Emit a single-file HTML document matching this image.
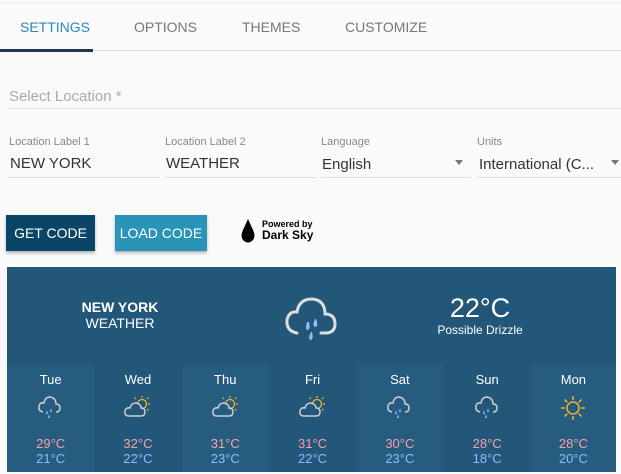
<!DOCTYPE html><html><head><style>
body{margin:0;width:621px;height:474px;background:#fafafa;font-family:"Liberation Sans",sans-serif;position:relative;overflow:hidden}
.a{position:absolute}
.tab{position:absolute;top:19px;font-size:14px;color:#777}
.lab{position:absolute;top:136px;font-size:11px;color:#888}
.val{position:absolute;top:155px;font-size:15px;color:#333}
.ln{position:absolute;height:1px;background:#ddd;top:177px}
.col{position:absolute;top:365px;width:87.3px;height:107px;text-align:center;color:#fff}
.col .d{position:absolute;top:7px;width:100%;font-size:13px}
.col .h{position:absolute;top:71px;width:100%;font-size:13px;color:#f4a0a8}
.col .l{position:absolute;top:86px;width:100%;font-size:13px;color:#8cbcff}
.col svg{position:absolute;left:28px;top:28px}
</style></head><body>
<div class="a" style="left:0;top:2px;width:621px;height:1px;background:#eee"></div>
<div class="tab" style="left:20px;color:#2a8ab7">SETTINGS</div>
<div class="tab" style="left:134px">OPTIONS</div>
<div class="tab" style="left:242px">THEMES</div>
<div class="tab" style="left:345px">CUSTOMIZE</div>
<div class="a" style="left:0;top:50px;width:621px;height:1px;background:#ddd"></div>
<div class="a" style="left:0;top:49px;width:93px;height:3px;background:#1e3a52"></div>
<div class="a" style="left:9px;top:88px;font-size:15px;color:#aaa">Select Location *</div>
<div class="a" style="left:8px;top:108px;width:613px;height:1px;background:#ddd"></div>
<div class="lab" style="left:9px">Location Label 1</div>
<div class="lab" style="left:165px">Location Label 2</div>
<div class="lab" style="left:321px">Language</div>
<div class="lab" style="left:477px">Units</div>
<div class="val" style="left:10px">NEW YORK</div>
<div class="val" style="left:166px">WEATHER</div>
<div class="val" style="left:322px;top:156px">English</div>
<div class="val" style="left:479px;top:156px">International (C...</div>
<div class="a" style="left:455px;top:160px;border:4px solid transparent;border-top:5px solid #777"></div>
<div class="a" style="left:611px;top:160px;border:4px solid transparent;border-top:5px solid #777"></div>
<div class="ln" style="left:8px;width:152px"></div><div class="ln" style="left:165px;width:151px"></div>
<div class="ln" style="left:321px;width:150px"></div><div class="ln" style="left:477px;width:144px"></div>
<div class="a" style="left:6px;top:215px;width:89px;height:36px;background:#0a4466;color:#fff;font-size:14px;line-height:36px;text-align:center;box-shadow:0 2px 3px rgba(0,0,0,.3)">GET CODE</div>
<div class="a" style="left:115px;top:215px;width:92px;height:36px;background:#2a93b8;color:#fff;font-size:14px;line-height:36px;text-align:center;box-shadow:0 2px 3px rgba(0,0,0,.3)">LOAD CODE</div>
<svg class="a" style="left:240px;top:218px" width="16" height="26"><path d="M8 1 L3 12 Q0 18 3 22 Q8 27 13 22 Q16 18 13 12 Z" fill="#000"/></svg>
<div class="a" style="left:262px;top:219px;font-size:9px;font-weight:bold;line-height:10px">Powered by<br><span style="font-size:12px;line-height:13px">Dark Sky</span></div>
<div class="a" style="left:7px;top:267px;width:609px;height:205px;background:#22577a"></div>
<div class="a" style="left:60px;top:299px;width:120px;text-align:center;color:#fff;font-size:14px;line-height:16px"><b>NEW YORK</b><br>WEATHER</div>
<svg class="a" style="left:280px;top:292px" width="64" height="60"><path d="M17 41 Q6 39 7 28 Q9 19 17 20 Q19 7 32 7 Q45 8 45 22 Q55 22 55 32 Q55 41 45 41 L41 41" fill="none" stroke="#ddd" stroke-width="3" stroke-linecap="round"/><path d="M27 30 Q25 36 27 38 Q31 38 29 30Z M35 27 Q32 34 35 35 Q39 35 36 27Z M31 40 Q28 46 30 48 Q34 48 32 40Z" fill="#8cbcff"/></svg>
<div class="a" style="left:420px;top:293px;width:120px;text-align:center;color:#fff;font-size:27px">22°C</div>
<div class="a" style="left:420px;top:323px;width:120px;text-align:center;color:#fff;font-size:12px">Possible Drizzle</div>
<div class="col" style="left:7px;background:#265c80"><div class="d">Tue</div><svg width="30" height="30"><path d="M8 19 Q3 18 4 13 Q5 9 9 10 Q10 4 15 4 Q21 5 21 11 Q25 11 25 15 Q25 19 21 19" fill="none" stroke="#ccc" stroke-width="1.5"/><path d="M12 17l-1 4h2zM16 15l-1 4h2zM14 21l-1 4h2z" fill="#8cbcff"/></svg><div class="h">29°C</div><div class="l">21°C</div></div>
<div class="col" style="left:94.3px"><div class="d">Wed</div><svg width="30" height="30"><circle cx="20" cy="11" r="4.5" fill="none" stroke="#f0b429" stroke-width="1.3"/><path d="M20 3v2M26 11h2M25 6l1.5-1.5M25 16l1.5 1.5M14 6l-1.5-1.5" stroke="#f0b429" stroke-width="1.2"/><path d="M6 23 Q2 22 3 18 Q4 14 8 15 Q9 10 14 10 Q19 11 19 15 Q23 15 23 19 Q23 23 19 23Z" fill="#22577a" stroke="#ccc" stroke-width="1.5"/></svg><div class="h">32°C</div><div class="l">22°C</div></div>
<div class="col" style="left:181.6px;background:#265c80"><div class="d">Thu</div><svg width="30" height="30"><circle cx="20" cy="11" r="4.5" fill="none" stroke="#f0b429" stroke-width="1.3"/><path d="M20 3v2M26 11h2M25 6l1.5-1.5M25 16l1.5 1.5M14 6l-1.5-1.5" stroke="#f0b429" stroke-width="1.2"/><path d="M6 23 Q2 22 3 18 Q4 14 8 15 Q9 10 14 10 Q19 11 19 15 Q23 15 23 19 Q23 23 19 23Z" fill="#265c80" stroke="#ccc" stroke-width="1.5"/></svg><div class="h">31°C</div><div class="l">23°C</div></div>
<div class="col" style="left:268.9px"><div class="d">Fri</div><svg width="30" height="30"><circle cx="20" cy="11" r="4.5" fill="none" stroke="#f0b429" stroke-width="1.3"/><path d="M20 3v2M26 11h2M25 6l1.5-1.5M25 16l1.5 1.5M14 6l-1.5-1.5" stroke="#f0b429" stroke-width="1.2"/><path d="M6 23 Q2 22 3 18 Q4 14 8 15 Q9 10 14 10 Q19 11 19 15 Q23 15 23 19 Q23 23 19 23Z" fill="#22577a" stroke="#ccc" stroke-width="1.5"/></svg><div class="h">31°C</div><div class="l">22°C</div></div>
<div class="col" style="left:356.2px;background:#265c80"><div class="d">Sat</div><svg width="30" height="30"><path d="M8 19 Q3 18 4 13 Q5 9 9 10 Q10 4 15 4 Q21 5 21 11 Q25 11 25 15 Q25 19 21 19" fill="none" stroke="#ccc" stroke-width="1.5"/><path d="M12 17l-1 4h2zM16 15l-1 4h2zM14 21l-1 4h2z" fill="#8cbcff"/></svg><div class="h">30°C</div><div class="l">23°C</div></div>
<div class="col" style="left:443.5px"><div class="d">Sun</div><svg width="30" height="30"><path d="M8 19 Q3 18 4 13 Q5 9 9 10 Q10 4 15 4 Q21 5 21 11 Q25 11 25 15 Q25 19 21 19" fill="none" stroke="#ccc" stroke-width="1.5"/><path d="M12 17l-1 4h2zM16 15l-1 4h2zM14 21l-1 4h2z" fill="#8cbcff"/></svg><div class="h">28°C</div><div class="l">18°C</div></div>
<div class="col" style="left:530.8px;background:#265c80;width:85.2px"><div class="d">Mon</div><svg width="30" height="30"><circle cx="14" cy="15" r="6" fill="none" stroke="#f0b429" stroke-width="1.5"/><path d="M14 3v4M14 23v4M2 15h4M22 15h4M5.5 6.5l2.8 2.8M19.7 20.7l2.8 2.8M5.5 23.5l2.8-2.8M19.7 9.3l2.8-2.8" stroke="#f0b429" stroke-width="1.5"/></svg><div class="h">28°C</div><div class="l">20°C</div></div>
</body></html>
